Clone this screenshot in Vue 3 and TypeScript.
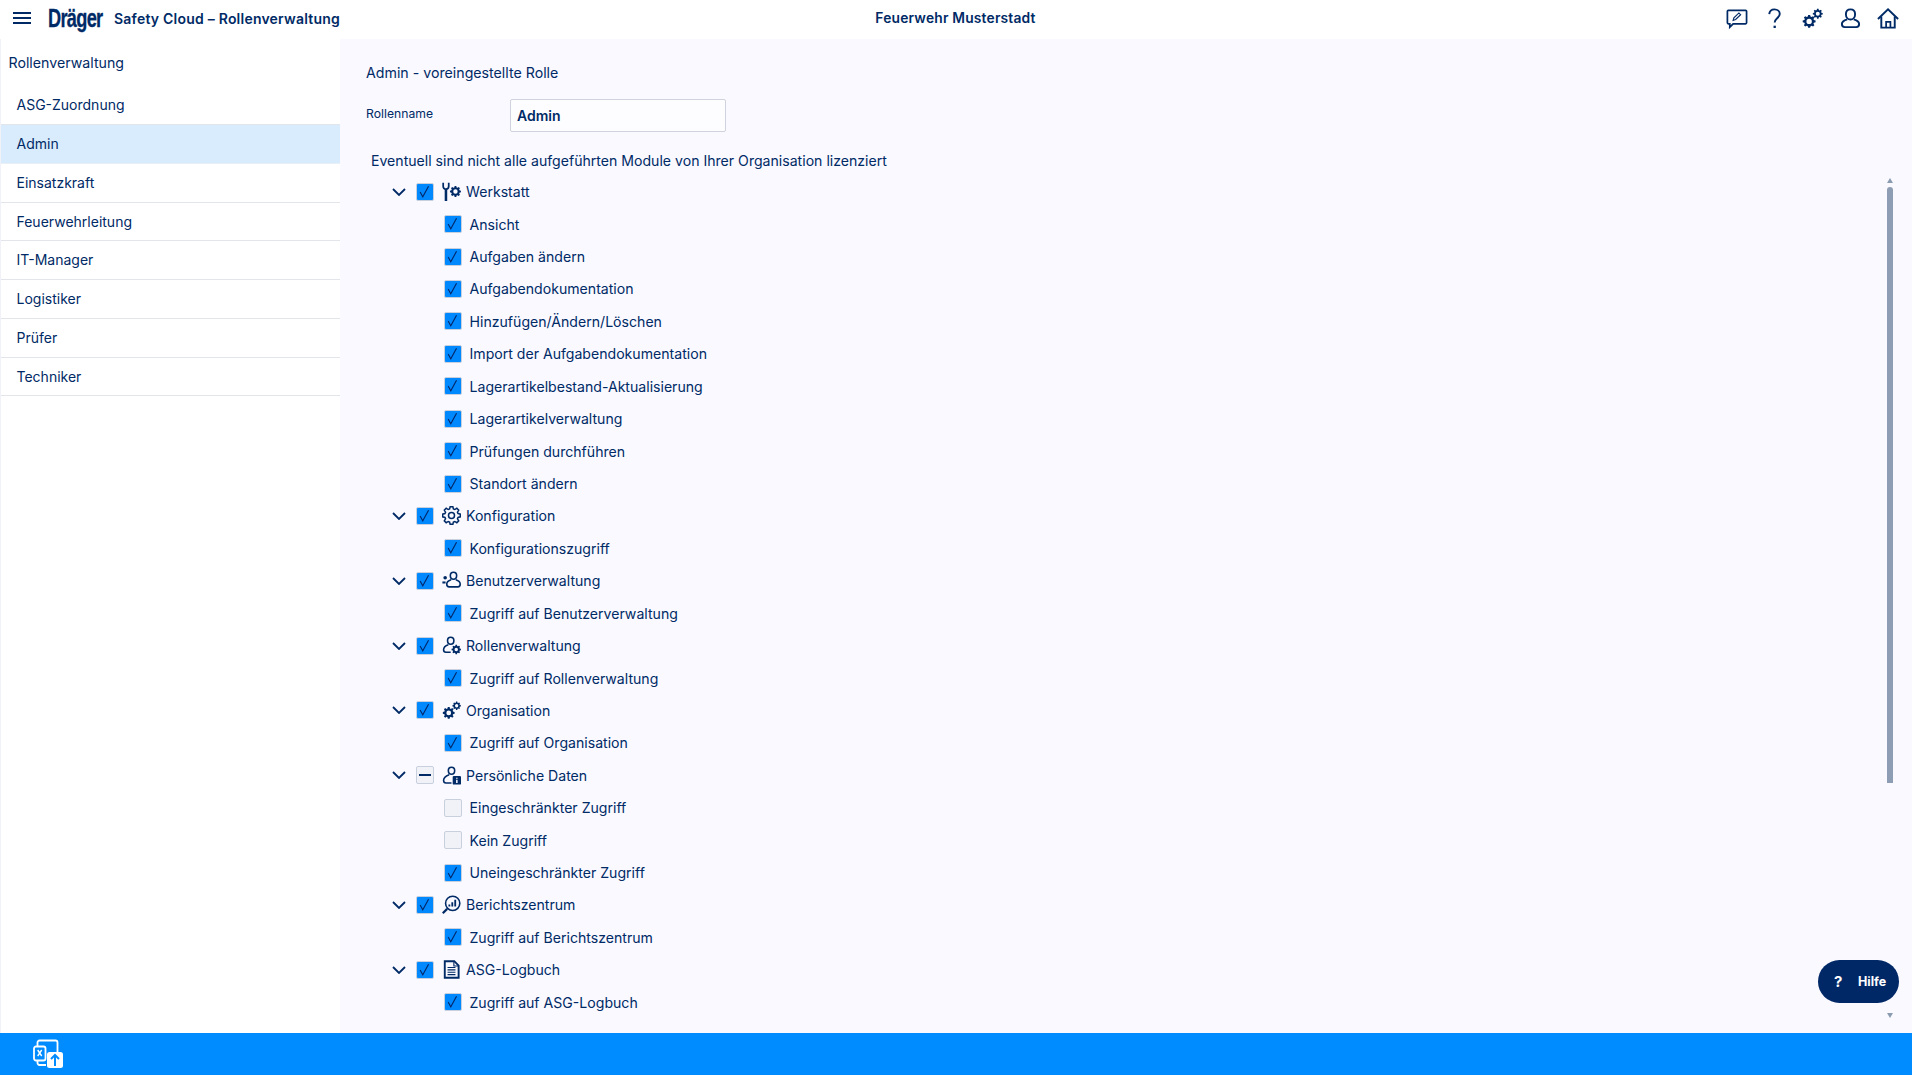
<template>
  <div class="shell">
    <header class="topbar">
      <div class="topbar-left">
        <button class="menu-btn" aria-label="Menü"><span></span><span></span><span></span></button>
        <span class="logo">Dräger</span>
        <span class="app-title">Safety Cloud – Rollenverwaltung</span>
      </div>
      <div class="org-name">Feuerwehr Musterstadt</div>
      <div class="topbar-right">
        <svg class="top-icon" viewBox="0 0 24 24">
          <path d="M3.500 3.500h18a1 1 0 0 1 1 1v12a1 1 0 0 1-1 1H8.500l-3.500 3.500v-3.500H3.500a1 1 0 0 1-1-1v-12a1 1 0 0 1 1-1z" />
          <path d="M8.500 14l.8-2.800 5.200-5 1.800 1.800-5.200 5z" stroke-width="1.200" />
        </svg>
        <svg class="top-icon" viewBox="0 0 24 24">
          <path d="M6.500 7.500C6.800 4.300 9 2.500 12 2.500c3.200 0 5.500 2 5.500 4.800 0 4-5.300 4.400-5.300 9" stroke-width="2" />
          <path d="M12.200 19.500v2.400" stroke-width="2.400" />
        </svg>
        <svg class="top-icon" viewBox="0 0 24 24">
          <path class="solid" fill-rule="evenodd" :d="gear(8.500, 15, 6.800, 2.800)" />
          <path class="solid" fill-rule="evenodd" :d="gear(17.500, 7, 5.200, 2.100)" />
        </svg>
        <svg class="top-icon" viewBox="0 0 24 24">
          <path d="M12 2.500c3 0 4.800 2.200 4.800 5 0 3-2 5.600-4.800 5.600S7.200 10.500 7.200 7.500c0-2.800 1.800-5 4.800-5z" stroke-width="2" />
          <path d="M8.600 13C5.500 14 3 15 3 17.800 3 20 4.500 21 6 21h12c1.500 0 3-1 3-3.200 0-2.800-2.500-3.800-5.600-4.800" stroke-width="2" />
        </svg>
        <svg class="top-icon" viewBox="0 0 24 24">
          <path d="M1 12.500L11.500 2.500 22 12.500" stroke-width="2" />
          <path d="M4.500 10v11.500h14V10" stroke-width="2" />
          <path d="M9.500 21.500v-6H14v6" />
        </svg>
      </div>
    </header>

    <div class="body">
      <aside class="sidebar">
        <div class="sidebar-title">Rollenverwaltung</div>
        <ul class="role-list">
          <li
            v-for="role in roles"
            :key="role"
            class="role-item"
            :class="{ active: role === 'Admin' }"
          >
            {{ role }}
          </li>
        </ul>
      </aside>

      <main class="content">
        <div class="page-title">Admin - voreingestellte Rolle</div>
        <div class="name-row">
          <label class="name-label">Rollenname</label>
          <input class="name-input" value="Admin" />
        </div>
        <div class="hint">Eventuell sind nicht alle aufgeführten Module von Ihrer Organisation lizenziert</div>

        <div class="tree-wrap">
          <div class="tree">
            <template v-for="group in groups" :key="group.name">
              <div class="row group-row">
                <svg class="chevron" viewBox="0 0 14 8"><path d="M1 1l6 6 6-6" /></svg>
                <span class="box" :class="group.state"><svg v-if="group.state === 'on'" viewBox="0 0 18 18"><path d="M3.500 9l3 5.500L13 2.500" /></svg><i v-else></i></span>
                <svg class="mod-icon" viewBox="0 0 24 24">
                  <template v-if="group.icon === 'tools'">
                    <path d="M1.500 1v4.500a3.500 3.500 0 0 0 7 0V1" stroke-width="2.200" />
                    <path d="M5 9v15" stroke-width="3.200" />
                    <path class="solid" fill-rule="evenodd" :d="gear(17, 12, 7, 2.800)" />
                  </template>
                  <template v-else-if="group.icon === 'gear'">
                    <path :d="gearOutline(12, 12, 11.300, 8.600)" stroke-width="1.900" />
                    <circle cx="12" cy="12" r="3.800" stroke-width="1.900" />
                  </template>
                  <template v-else-if="group.icon === 'users'">
                    <path d="M14.500 1.500c2.600 0 4 1.900 4 4.300 0 2.600-1.700 4.700-4 4.700s-4-2.100-4-4.700c0-2.400 1.400-4.300 4-4.300z" stroke-width="2" />
                    <path d="M11.500 11C8.500 12 6 13.500 6 16.300c0 2.200 1.500 3.700 3 3.700h11c1.800 0 3-1.500 3-3.700 0-2.800-2.500-4.300-5.500-5.300" stroke-width="2" />
                    <circle class="solid" cx="4" cy="8.500" r="2.300" />
                    <path d="M.500 14.500h4" stroke-width="2.600" />
                  </template>
                  <template v-else-if="group.icon === 'usergear'">
                    <path d="M11 1.500c2.600 0 4 1.900 4 4.300 0 2.600-1.700 4.700-4 4.700S7 8.400 7 5.800c0-2.400 1.400-4.300 4-4.300z" stroke-width="2" />
                    <path d="M8 11C5 12 2 14 2 17.300c0 2 1.200 3.200 3 3.200h6" stroke-width="2" />
                    <path class="solid" fill-rule="evenodd" :d="gear(18, 17, 6, 2.200)" />
                  </template>
                  <template v-else-if="group.icon === 'gears'">
                    <path class="solid" fill-rule="evenodd" :d="gear(8.500, 15, 7.500, 3)" />
                    <path class="solid" fill-rule="evenodd" :d="gear(18.500, 6, 5.300, 2.100)" />
                  </template>
                  <template v-else-if="group.icon === 'userinfo'">
                    <path d="M12 1.500c2.600 0 4 1.900 4 4.300 0 2.600-1.700 4.700-4 4.700S8 8.400 8 5.800c0-2.400 1.400-4.300 4-4.300z" stroke-width="2" />
                    <path d="M9 11C5.500 12.300 2 14 2 18c0 2 1.200 3.500 3 3.500h7" stroke-width="2" />
                    <rect class="solid" x="13.500" y="12.500" width="10.500" height="11" rx="1.500" />
                    <path d="M18.750 14.700v1.500M18.750 17.500v4" stroke="#f9f9ff" stroke-width="1.900" />
                  </template>
                  <template v-else-if="group.icon === 'report'">
                    <circle cx="13.500" cy="10.500" r="9" stroke-width="2" />
                    <path d="M6.500 17.500L1 23" stroke-width="2.800" />
                    <path d="M9.300 12v2.500M13 9v5.500M16.700 6v8.500" stroke-width="2.300" />
                  </template>
                  <template v-else>
                    <path d="M3.500 1.500h12l5.500 5.500v15.500H3.500z" stroke-width="2.400" />
                    <path d="M15 1.500V7.500h6" stroke-width="1.400" />
                    <path d="M7 9.500h10M7 12.500h10M7 15.500h10M7 18.500h10" stroke-width="1.500" />
                  </template>
                </svg>
                <span class="row-label">{{ group.name }}</span>
              </div>
              <div v-for="child in group.children" :key="child.name" class="row child-row">
                <span class="box child-box" :class="child.on ? 'on' : 'off'"><svg v-if="child.on" viewBox="0 0 18 18"><path d="M3.500 9l3 5.500L13 2.500" /></svg></span>
                <span class="row-label">{{ child.name }}</span>
              </div>
            </template>
          </div>

          <div class="scrollbar">
            <span class="arrow up"></span>
            <div class="track"><div class="thumb"></div></div>
            <span class="arrow down"></span>
          </div>
        </div>

        <button class="help-btn"><span class="help-q">?</span>Hilfe</button>
      </main>
    </div>

    <footer class="footer">
      <svg class="export-icon" viewBox="0 0 30 30">
        <path d="M4.500 7V3.500a2 2 0 0 1 2-2h16a2 2 0 0 1 2 2V13" />
        <path d="M13 26H6.500a2 2 0 0 1-2-2v-2.500" />
        <rect x="1" y="7.500" width="11.500" height="14" rx="2" fill="#008cff" />
        <path d="M4.700 11l4 6M8.700 11l-4 6" stroke-width="1.400" />
        <rect x="14" y="13" width="16" height="16" rx="2.500" fill="#fff" stroke="none" />
        <path d="M22 27v-10.500M18 20l4-4 4 4" stroke="#008cff" stroke-width="2" />
      </svg>
    </footer>
  </div>
</template>

<script setup lang="ts">
interface Child {
  name: string
  on: boolean
}

interface Group {
  name: string
  icon: string
  state: 'on' | 'mixed'
  children: Child[]
}

const roles: string[] = [
  'ASG-Zuordnung',
  'Admin',
  'Einsatzkraft',
  'Feuerwehrleitung',
  'IT-Manager',
  'Logistiker',
  'Prüfer',
  'Techniker'
]

const on = (...names: string[]): Child[] => names.map((name) => ({ name, on: true }))

const groups: Group[] = [
  {
    name: 'Werkstatt',
    icon: 'tools',
    state: 'on',
    children: on(
      'Ansicht',
      'Aufgaben ändern',
      'Aufgabendokumentation',
      'Hinzufügen/Ändern/Löschen',
      'Import der Aufgabendokumentation',
      'Lagerartikelbestand-Aktualisierung',
      'Lagerartikelverwaltung',
      'Prüfungen durchführen',
      'Standort ändern'
    )
  },
  { name: 'Konfiguration', icon: 'gear', state: 'on', children: on('Konfigurationszugriff') },
  { name: 'Benutzerverwaltung', icon: 'users', state: 'on', children: on('Zugriff auf Benutzerverwaltung') },
  { name: 'Rollenverwaltung', icon: 'usergear', state: 'on', children: on('Zugriff auf Rollenverwaltung') },
  { name: 'Organisation', icon: 'gears', state: 'on', children: on('Zugriff auf Organisation') },
  {
    name: 'Persönliche Daten',
    icon: 'userinfo',
    state: 'mixed',
    children: [
      { name: 'Eingeschränkter Zugriff', on: false },
      { name: 'Kein Zugriff', on: false },
      { name: 'Uneingeschränkter Zugriff', on: true }
    ]
  },
  { name: 'Berichtszentrum', icon: 'report', state: 'on', children: on('Zugriff auf Berichtszentrum') },
  { name: 'ASG-Logbuch', icon: 'doc', state: 'on', children: on('Zugriff auf ASG-Logbuch') }
]

// outline of an 8-tooth gear, no hole
function gearOutline(cx: number, cy: number, outer: number, inner: number): string {
  const pts: string[] = []
  const teeth = 8
  for (let i = 0; i < teeth; i++) {
    const a = (i * Math.PI * 2) / teeth
    const w = Math.PI / teeth
    const steps: [number, number][] = [
      [inner, a - w * 0.72],
      [outer, a - w * 0.38],
      [outer, a + w * 0.38],
      [inner, a + w * 0.72]
    ]
    for (const [r, t] of steps) {
      pts.push(`${(cx + r * Math.cos(t)).toFixed(2)} ${(cy + r * Math.sin(t)).toFixed(2)}`)
    }
  }
  return `M${pts.join('L')}z`
}

// solid gear with a round hole, use with fill-rule evenodd
function gear(cx: number, cy: number, outer: number, hole: number): string {
  const ring = gearOutline(cx, cy, outer, outer * 0.76)
  return `${ring}M${cx - hole} ${cy}a${hole} ${hole} 0 1 0 ${hole * 2} 0a${hole} ${hole} 0 1 0 ${-hole * 2} 0z`
}
</script>

<style>
html,
body {
  margin: 0;
  height: 100%;
  overflow: hidden;
}
</style>

<style scoped>
.shell {
  display: flex;
  flex-direction: column;
  height: 100vh;
  font-family: Inter, 'Noto Sans', sans-serif;
  font-size: 14px;
  color: #002a66;
  background: #fff;
}
.topbar {
  flex: 0 0 39px;
  display: grid;
  grid-template-columns: 1fr auto 1fr;
  align-items: center;
  padding: 0 12px 3px 13px;
  background: #fff;
  box-sizing: border-box;
}
.topbar-left {
  display: flex;
  align-items: center;
}
.menu-btn {
  display: flex;
  flex-direction: column;
  gap: 3px;
  width: 18px;
  padding: 0;
  border: 0;
  background: none;
}
.menu-btn span {
  height: 2px;
  background: #002a66;
}
.logo {
  display: inline-block;
  width: 55px;
  margin-left: 17px;
  font-family: 'Liberation Sans', sans-serif;
  font-size: 26px;
  font-weight: 700;
  line-height: 30px;
  letter-spacing: -1px;
  color: #002a66;
  -webkit-text-stroke: 0.3px #002a66;
  transform: scaleX(0.7);
  transform-origin: left center;
  white-space: nowrap;
}
.app-title {
  margin-left: 11px;
  font-size: 14px;
  font-weight: 600;
  letter-spacing: 0.22px;
  white-space: nowrap;
}
.org-name {
  margin-right: 2px;
  font-size: 13.800px;
  font-weight: 600;
  letter-spacing: 0.2px;
}
.topbar-right {
  display: flex;
  justify-content: flex-end;
  gap: 15px;
}
.top-icon {
  width: 23px;
  height: 23px;
  fill: none;
  stroke: #002a66;
  stroke-width: 1.800;
}
.solid {
  fill: currentColor;
  stroke: none;
}
.top-icon .solid {
  fill: #002a66;
}
.body {
  flex: 1;
  display: flex;
  min-height: 0;
}
.sidebar {
  flex: 0 0 340px;
  box-sizing: border-box;
  border-left: 1px solid #f0f2f8;
  background: #fff;
}
.sidebar-title {
  padding: 14px 7.500px 0;
  height: 47.300px;
  box-sizing: border-box;
  line-height: 20px;
  font-size: 14.200px;
}
.role-list {
  list-style: none;
  margin: 0;
  padding: 0;
}
.role-item {
  height: 38.750px;
  box-sizing: border-box;
  padding-left: 15.500px;
  line-height: 38px;
  font-size: 14px;
  border-bottom: 1px solid #e2e5ea;
}
.role-item.active {
  background: #d9ecfd;
  border-bottom-color: #e8f0f6;
}
.content {
  position: relative;
  flex: 1;
  display: flex;
  flex-direction: column;
  min-width: 0;
  padding: 24px 0 0 26px;
  box-sizing: border-box;
  background: #f9f9ff;
}
.page-title {
  line-height: 20px;
  font-size: 14.200px;
}
.name-row {
  display: flex;
  align-items: flex-start;
  margin-top: 16px;
}
.name-label {
  width: 144px;
  padding-top: 6px;
  font-size: 12.200px;
  line-height: 18px;
}
.name-input {
  width: 216px;
  height: 33px;
  box-sizing: border-box;
  padding: 0 6px;
  border: 1px solid #cfd3dd;
  border-radius: 2px;
  background: #fdfdff;
  font: 600 14px Inter, 'Noto Sans', sans-serif;
  color: #002a66;
  outline: none;
}
.hint {
  margin: 19px 0 0 5px;
  line-height: 20px;
  font-size: 14.100px;
}
.tree-wrap {
  flex: 1;
  display: flex;
  min-height: 0;
  margin-top: 4.500px;
}
.tree {
  flex: 1;
  overflow: hidden;
  padding-left: 26px;
}
.row {
  display: flex;
  align-items: center;
  height: 32.430px;
  font-size: 14.100px;
  white-space: nowrap;
}
.chevron {
  width: 14px;
  height: 8px;
  margin-right: 9.500px;
  fill: none;
  stroke: #002a66;
  stroke-width: 1.800;
}
.box {
  flex: none;
  display: flex;
  align-items: center;
  justify-content: center;
  width: 18px;
  height: 18px;
  box-sizing: border-box;
  border: 1px solid #c8d0de;
  border-radius: 2px;
}
.box svg {
  width: 18px;
  height: 18px;
  fill: none;
  stroke: #00296b;
  stroke-width: 1.300;
}
.box.on {
  background: #0088ff;
}
.box.off,
.box.mixed {
  background: #f1f2f8;
}
.box.mixed i {
  width: 12px;
  height: 2px;
  background: #002a66;
}
.mod-icon {
  flex: none;
  width: 19px;
  height: 19px;
  margin: 0 5px 0 8.500px;
  fill: none;
  stroke: currentColor;
  stroke-width: 1.800;
}
.child-row {
  padding-left: 52px;
}
.child-box {
  margin-right: 7.500px;
}
.scrollbar {
  flex: 0 0 14px;
  display: flex;
  flex-direction: column;
  align-items: center;
  margin: 2px 15px 0 0;
  height: 840.500px;
}
.arrow {
  width: 0;
  height: 0;
  border-left: 3.500px solid transparent;
  border-right: 3.500px solid transparent;
}
.arrow.up {
  border-bottom: 5px solid #8b9bb0;
}
.arrow.down {
  border-top: 5px solid #8b9bb0;
}
.track {
  flex: 1;
  width: 100%;
  display: flex;
  justify-content: center;
  padding-top: 4px;
}
.thumb {
  width: 6px;
  height: 596px;
  border-radius: 3px 3px 0 0;
  background: #8d9db3;
}
.help-btn {
  position: absolute;
  right: 13px;
  bottom: 30px;
  display: flex;
  align-items: center;
  width: 81px;
  height: 43px;
  padding: 0 0 0 16px;
  border: 0;
  border-radius: 22px;
  background: #002766;
  color: #fff;
  font: 700 12.500px Inter, 'Noto Sans', sans-serif;
}
.help-q {
  width: 24px;
  text-align: left;
  font-size: 15px;
}
.footer {
  flex: 0 0 42px;
  display: flex;
  align-items: center;
  padding-left: 33px;
  background: #008cff;
}
.export-icon {
  width: 30px;
  height: 30px;
  fill: none;
  stroke: #fff;
  stroke-width: 1.800;
}
</style>
